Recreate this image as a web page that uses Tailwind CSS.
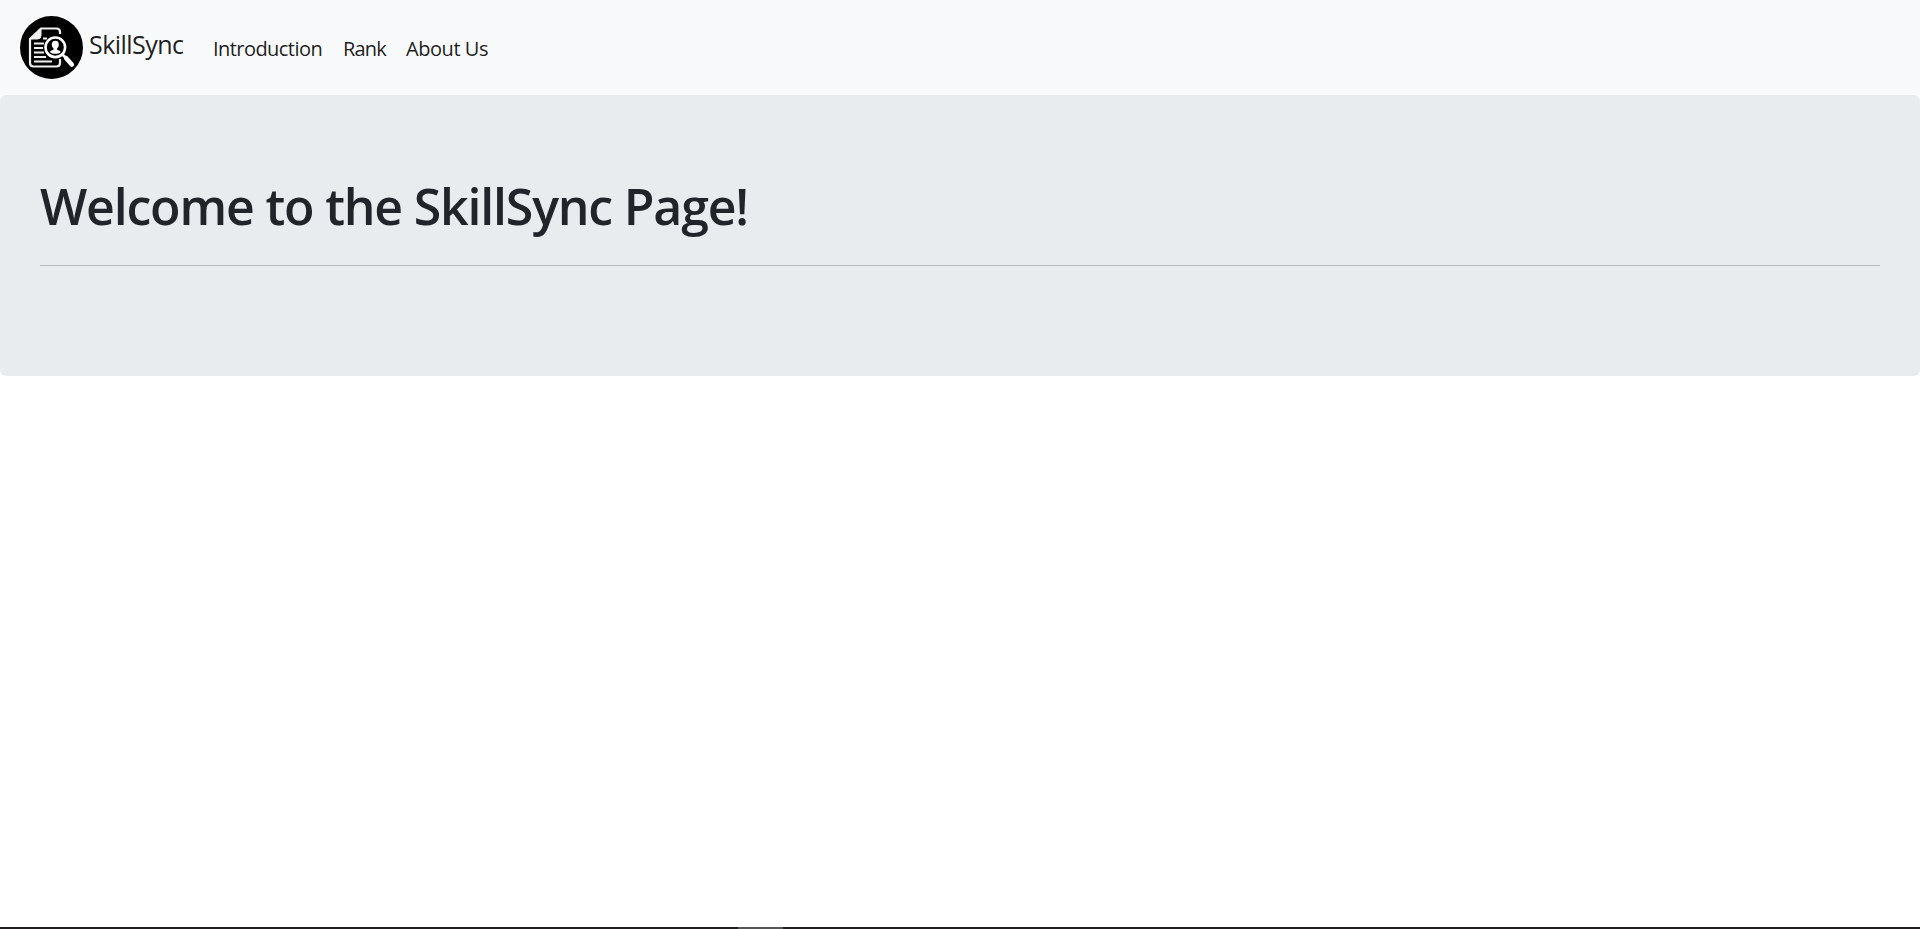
<!DOCTYPE html>
<html lang="en">
<head>
<meta charset="utf-8">
<title>SkillSync</title>
<script src="https://cdn.jsdelivr.net/npm/@tailwindcss/browser@4"></script>
</head>
<body class="bg-white h-[929px] overflow-hidden flex flex-col font-['Open_Sans','Noto_Sans',sans-serif] text-[#212529]">
<nav class="h-[95px] shrink-0 bg-[#f8f9fa] flex items-start pl-5 pt-4 text-black/90">
  <a class="flex items-start w-[193px]">
    <svg class="w-[63px] h-[63px] shrink-0" viewBox="0 0 63 63" fill="none">
      <circle cx="31.5" cy="31.5" r="31.5" fill="#000"/>
      <path d="M40 18V16q0-3.500-3.500-3.500H21L10 23v24q0 3.500 3.500 3.500h23q3.500 0 3.500-3.500v-4" stroke="#eef0f0" stroke-width="2.200"/>
      <path d="M10 23 21 12.500v7q0 3.500-3.500 3.500Z" fill="#eef0f0" stroke="#eef0f0"/>
      <path d="M23 22.500h4M14 27.500h10M14 32h9M14 36.500h10M14 41h12M14 45.500h18" stroke="#eef0f0" stroke-width="2"/>
      <circle cx="35.300" cy="31.300" r="9.800" fill="#000" stroke="#fff" stroke-width="2.600"/>
      <path d="M35.300 24.800c-2.500 0-3.500 1.600-3.500 3.700 0 2 .9 3.300 1.700 4v1.300c-1.500.5-3 1-3.700 2.100 2.500 2.600 8.500 2.600 11 0-.8-1.100-2.200-1.600-3.700-2.100v-1.300c.9-.7 1.700-2 1.700-4 0-2.100-1-3.700-3.500-3.700Z" fill="#fff"/>
      <path d="m42.500 38.500 4 4" stroke="#fff" stroke-width="2.600"/>
      <path d="m46.200 42.200 5.600 6.300" stroke="#fff" stroke-width="4.500" stroke-linecap="round"/>
    </svg>
    <span class="ml-[6px] mt-[10px] text-[25px] leading-[36px] tracking-[-0.55px] whitespace-nowrap">SkillSync</span>
  </a>
  <div class="flex mt-[18px] text-[20px] leading-[30px] whitespace-nowrap">
    <a class="w-[130px] tracking-[-0.55px]">Introduction</a>
    <a class="w-[63px] tracking-[-0.8px]">Rank</a>
    <a class="tracking-[-0.45px]">About Us</a>
  </div>
</nav>
<main class="h-[281px] shrink-0 bg-[#e9ecef] rounded-[6px] px-10 pt-[79px]">
  <h1 class="h-[91px] text-[50px] leading-[64px] font-semibold tracking-[-1.18px] whitespace-nowrap">Welcome to the SkillSync Page!</h1>
  <hr class="border-0 h-px bg-[#b4b8bb]">
</main>
<footer class="mt-auto h-[2px] bg-[#201c20] pl-[738px]"><div class="w-[45px] h-[2px] bg-[#565456]"></div></footer>
</body>
</html>
